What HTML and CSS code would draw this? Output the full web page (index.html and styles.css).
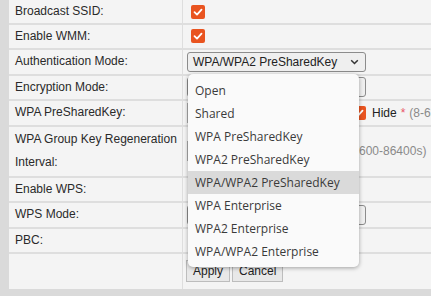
FILE: index.html
```html
<!DOCTYPE html>
<html lang="en">
  <head>
    <meta charset="UTF-8" />
    <meta name="viewport" content="width=device-width, initial-scale=1.0" />
    <title>Wireless Security</title>
    <link rel="stylesheet" href="styles.css">
  </head>

  <body>
    <div id="page">
      <div id="form">
        <div class="row first">
          <div class="label">Broadcast SSID:</div>
          <div class="value">
            <span class="check"><svg width="14" height="14" viewBox="0 0 14 14"><path d="M3.5 7.2 L6 9.6 L10.5 4.6" fill="none" stroke="#fff" stroke-width="1.8" stroke-linecap="round" stroke-linejoin="round"/></svg></span>
          </div>
        </div>
        <div class="row">
          <div class="label">Enable WMM:</div>
          <div class="value">
            <span class="check"><svg width="14" height="14" viewBox="0 0 14 14"><path d="M3.5 7.2 L6 9.6 L10.5 4.6" fill="none" stroke="#fff" stroke-width="1.8" stroke-linecap="round" stroke-linejoin="round"/></svg></span>
          </div>
        </div>
        <div class="row">
          <div class="label">Authentication Mode:</div>
          <div class="value">
            <div class="select">
              <span>WPA/WPA2 PreSharedKey</span>
              <svg class="chev" width="9" height="6" viewBox="0 0 9 6"><path d="M1.2 1.2 L4.5 4.5 L7.8 1.2" fill="none" stroke="#333" stroke-width="1.5"/></svg>
            </div>
          </div>
        </div>
        <div class="row">
          <div class="label">Encryption Mode:</div>
          <div class="value">
            <div class="select">
              <span></span>
              <svg class="chev" width="9" height="6" viewBox="0 0 9 6"><path d="M1.2 1.2 L4.5 4.5 L7.8 1.2" fill="none" stroke="#333" stroke-width="1.5"/></svg>
            </div>
          </div>
        </div>
        <div class="row">
          <div class="label">WPA PreSharedKey:</div>
          <div class="value">
            <input class="field" type="password" />
            <span class="check"><svg width="14" height="14" viewBox="0 0 14 14"><path d="M3.5 7.2 L6 9.6 L10.5 4.6" fill="none" stroke="#fff" stroke-width="1.8" stroke-linecap="round" stroke-linejoin="round"/></svg></span>
            <span class="hide">Hide</span>
            <span class="req">*</span>
            <span class="hint">(8-63)</span>
          </div>
        </div>
        <div class="row double">
          <div class="label">WPA Group Key Regeneration Interval:</div>
          <div class="value">
            <input class="field" type="text" />
            <span class="hint">(600-86400s)</span>
          </div>
        </div>
        <div class="row">
          <div class="label">Enable WPS:</div>
          <div class="value">
            <span class="check"><svg width="14" height="14" viewBox="0 0 14 14"><path d="M3.5 7.2 L6 9.6 L10.5 4.6" fill="none" stroke="#fff" stroke-width="1.8" stroke-linecap="round" stroke-linejoin="round"/></svg></span>
          </div>
        </div>
        <div class="row">
          <div class="label">WPS Mode:</div>
          <div class="value">
            <div class="select">
              <span></span>
              <svg class="chev" width="9" height="6" viewBox="0 0 9 6"><path d="M1.2 1.2 L4.5 4.5 L7.8 1.2" fill="none" stroke="#333" stroke-width="1.5"/></svg>
            </div>
          </div>
        </div>
        <div class="row">
          <div class="label">PBC:</div>
          <div class="value"></div>
        </div>
        <div class="row buttons">
          <div class="label"></div>
          <div class="value">
            <button type="submit" class="btn">Apply</button>
            <button type="button" class="btn">Cancel</button>
          </div>
        </div>
      </div>
    </div>

    <ul id="popup">
      <li>Open</li>
      <li>Shared</li>
      <li>WPA PreSharedKey</li>
      <li>WPA2 PreSharedKey</li>
      <li class="on">WPA/WPA2 PreSharedKey</li>
      <li>WPA Enterprise</li>
      <li>WPA2 Enterprise</li>
      <li>WPA/WPA2 Enterprise</li>
    </ul>
  </body>
</html>
```

FILE: styles.css
```css
body {
  margin: 0;
  background: #dadada;
  font-family: "Liberation Sans", Arial, sans-serif;
  font-size: 12px;
  color: #333;
}

#page {
  padding-left: 9px;
  height: 296px;
  overflow: hidden;
}

#form {
  background: #f4f4f4;
}

.row {
  display: grid;
  grid-template-columns: 174px 1fr;
  height: 25.5px;
  box-sizing: border-box;
  border-bottom: 2px solid #dedede;
}

.row.first {
  height: 24.5px;
}

.row.double {
  height: 51px;
}

.row.buttons {
  height: 34.5px;
  border-bottom: none;
}

.label {
  display: flex;
  align-items: center;
  padding-left: 6px;
  line-height: 23px;
  border-right: 1px solid #dedede;
  color: #2a2a2a;
}

.value {
  display: flex;
  align-items: center;
  padding-left: 4px;
  white-space: nowrap;
  overflow: hidden;
}

.check {
  display: inline-flex;
  width: 14px;
  height: 14px;
  flex-shrink: 0;
  margin: 0 3px 0 4px;
  background: #e95420;
  border-radius: 2px;
}

.select {
  display: flex;
  align-items: center;
  justify-content: space-between;
  width: 179px;
  height: 20px;
  box-sizing: border-box;
  padding: 0 6px 0 5px;
  border: 1px solid #8c8c8c;
  border-radius: 3px;
  background: #efefef;
  color: #222;
}

.field {
  width: 164px;
  height: 20px;
  box-sizing: border-box;
  margin: 0;
  border: 1px solid #aaa;
  background: #fff;
  font: inherit;
}

.hide {
  margin-left: 3px;
  color: #222;
}

.req {
  margin-left: 4px;
  color: #e8566a;
}

.hint {
  margin-left: 4px;
  color: #8a8a8a;
}

.btn {
  height: 22px;
  margin: 0 3px 0 -1px;
  padding: 0 6px;
  border: 1px solid #bdbdbd;
  background: #e8e8e8;
  font: inherit;
  color: #222;
}

#popup {
  position: absolute;
  left: 188px;
  top: 74px;
  width: 171px;
  box-sizing: border-box;
  margin: 0;
  padding: 5px 0 4px;
  list-style: none;
  background: #fafafa;
  border-radius: 5px;
  box-shadow: 0 1px 4px rgba(0, 0, 0, 0.35);
  font-family: "Open Sans", sans-serif;
  font-size: 12px;
  color: #3a3a3a;
}

#popup li {
  height: 23px;
  line-height: 23px;
  padding-left: 7px;
}

#popup li.on {
  background: #dadada;
}
```
